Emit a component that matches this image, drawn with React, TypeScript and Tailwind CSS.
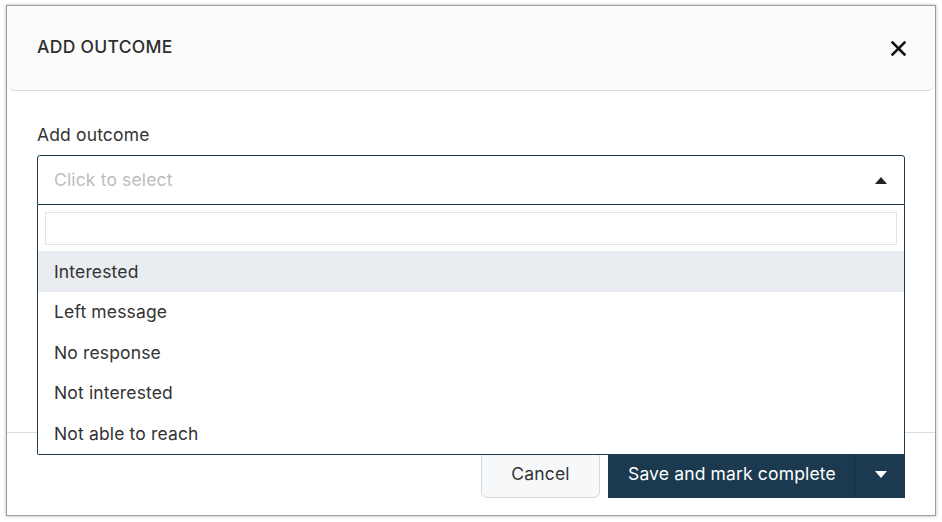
import { useState } from 'react'

const options = ['Interested', 'Left message', 'No response', 'Not interested', 'Not able to reach']

export default function App() {
  const [hovered, setHovered] = useState(0)

  return (
    <div className="w-[942px] h-[522px] bg-white pt-[5px] pl-[6px] font-['Inter',sans-serif] tracking-[0.15px] text-[#333]">
      <div className="w-[930px] h-[511px] border border-[#9c9c9c] shadow-[0_0_3px_rgba(0,0,0,0.3)] bg-white flex flex-col">
        {/* header */}
        <div className="h-[85px] shrink-0 bg-[#fbfbfc] rounded-b-[8px] border-b border-[#d3dbe3] flex items-center justify-between pl-[30px] pr-[30px]">
          <h2 className="text-[17.5px] font-medium tracking-[0.3px] text-[#2e2e2e] mt-[-2px]">ADD OUTCOME</h2>
          <button className="w-[16px] h-[16px] flex items-center justify-center mr-[-1px]">
            <svg width="15" height="15" viewBox="0 0 15 15">
              <path d="M1.5 1.5 L13.5 13.5 M13.5 1.5 L1.5 13.5" stroke="#111" strokeWidth="2.5" strokeLinecap="square" />
            </svg>
          </button>
        </div>

        {/* body */}
        <div className="flex-1 px-[30px] pt-[32px]">
          <label className="block text-[17.5px] leading-[24px] text-[#333] mb-[8px]">Add outcome</label>
          <div className="relative">
            <div className="h-[50px] border border-[#1d3a4f] rounded-t-[3px] flex items-center justify-between pl-[16px] pr-[17px]">
              <span className="text-[17.5px] text-[#bdbdbd] pt-[1px]">Click to select</span>
              <svg width="12" height="7" viewBox="0 0 12 7">
                <path d="M6 0 L12 7 L0 7 Z" fill="#222" />
              </svg>
            </div>
            <div className="absolute left-0 right-0 top-full z-10 bg-white border-x border-b border-[#1d3a4f] rounded-b-[2px]">
              <div className="px-[7px] pt-[7px] pb-[6px]">
                <div className="h-[33px] border border-[#e4e4e4] bg-white" />
              </div>
              {options.map((o, i) => (
                <div
                  key={o}
                  onMouseEnter={() => setHovered(i)}
                  className={`h-[40.5px] flex items-center pl-[16px] pt-[1px] text-[17.5px] text-[#333] ${hovered === i ? 'bg-[#e9ecf0]' : 'bg-white'}`}
                >
                  {o}
                </div>
              ))}
            </div>
          </div>
        </div>

        {/* footer */}
        <div className="h-[83px] shrink-0 border-t border-[#d6dee6] flex items-start justify-end pt-[18px] pr-[30px] gap-[8px]">
          <button className="w-[119px] h-[47px] rounded-[6px] border border-[#d3d8de] bg-[#f6f8fa] text-[17.5px] text-[#333]">
            Cancel
          </button>
          <div className="flex h-[47px] bg-[#1b3a4f] text-white">
            <button className="w-[247px] text-[17.5px] flex items-center pl-[20px]">Save and mark complete</button>
            <button className="w-[50px] border-l border-[#17334a] flex items-center justify-center">
              <svg width="12" height="7" viewBox="0 0 12 7">
                <path d="M0 0 L12 0 L6 7 Z" fill="#fff" />
              </svg>
            </button>
          </div>
        </div>
      </div>
    </div>
  )
}
